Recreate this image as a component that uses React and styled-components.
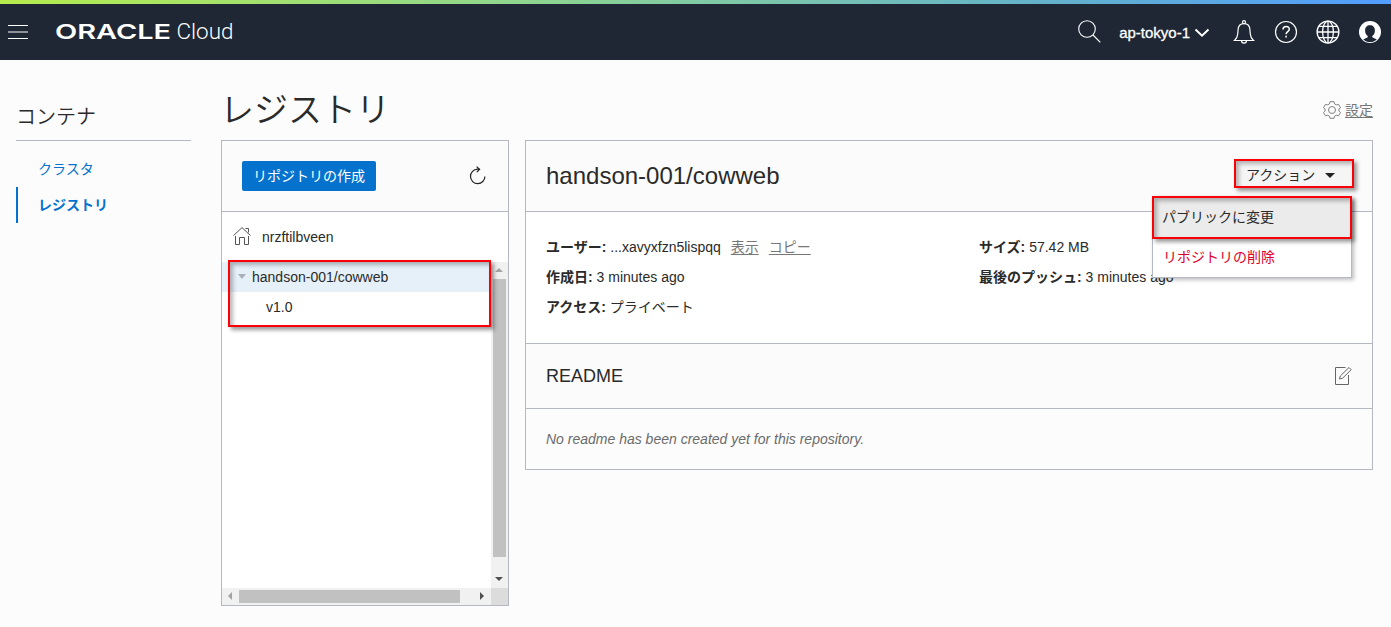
import React from "react";
import styled, { createGlobalStyle, css } from "styled-components";

const line = "#b3b8c3";
const blue = "#0572ce";

const GlobalStyle = createGlobalStyle`
  * { box-sizing: border-box; }
  body {
    margin: 0;
    background: #fcfcfc;
    color: #2a2a2a;
    font: 14px/30px "Liberation Sans", "Noto Sans CJK JP", sans-serif;
    overflow: hidden;
  }
  h1, h2, h3, p, ul { margin: 0; padding: 0; font-weight: 400; list-style: none; }
  button { font: inherit; color: inherit; border: 0; padding: 0; background: none; }
  svg { display: block; flex: none; }
`;

const Page = styled.div`
  height: 627px;
  overflow: hidden;
`;

const TopStripe = styled.div`
  height: 4px;
  background: linear-gradient(90deg, #b5ec4d 0%, #8fd590 38%, #63b1cc 76%, #529dff 100%);
`;

const Header = styled.header`
  height: 56px;
  display: flex;
  align-items: center;
  background: #1e2733;
  color: #fff;
  padding: 0 9px 0 8px;
`;

const MenuButton = styled.button`
  width: 20px;
  height: 14px;
  display: flex;
  flex-direction: column;
  justify-content: space-between;
`;

const MenuLine = styled.span`
  height: ${(p) => (p.$dim ? 2 : 1)}px;
  background: ${(p) => (p.$dim ? "#8f9399" : "#fff")};
`;

const Logo = styled.svg`
  margin-left: 27px;
`;

const HeaderTools = styled.div`
  margin-left: auto;
  display: flex;
  align-items: center;
`;

const Region = styled.div`
  display: flex;
  align-items: center;
  gap: 4px;
  margin: 1px 22px 0 18px;
  font-size: 15px;
  -webkit-text-stroke: 0.3px #fff;
`;

const HeaderIcons = styled.div`
  display: flex;
  align-items: center;
  gap: 18px;
`;

const SearchIcon = styled.svg`
  margin-bottom: 2px;
`;

const Body = styled.div`
  display: flex;
  gap: 30px;
  padding: 0 18px 0 16px;
`;

const Sidebar = styled.nav`
  width: 175px;
  padding-top: 38px;
`;

const SidebarTitle = styled.h2`
  height: 43px;
  line-height: 39px;
  font-size: 20px;
  font-weight: 350;
  border-bottom: 1px solid ${line};
  margin-bottom: 10px;
`;

const SidebarItem = styled.li`
  height: 36px;
  line-height: 36px;
  padding-left: 20px;
  color: ${blue};
  border-left: 2px solid ${(p) => (p.$active ? blue : "transparent")};
  font-weight: ${(p) => (p.$active ? 700 : 400)};
`;

const Main = styled.main`
  flex: 1;
  min-width: 0;
`;

const TitleRow = styled.div`
  height: 80px;
  display: flex;
  justify-content: space-between;
  align-items: center;
`;

const PageTitle = styled.h1`
  font-size: 34px;
  font-weight: 350;
  line-height: 50px;
  margin: 19px 0 0 -1px;
`;

const Settings = styled.a`
  display: flex;
  align-items: center;
  gap: 4px;
  color: #777;
  margin-top: 20px;
  text-decoration: underline;
  text-underline-offset: 2px;
`;

const Columns = styled.div`
  display: flex;
  align-items: flex-start;
  gap: 16px;
`;

const Panel = styled.section`
  border: 1px solid ${line};
  ${(p) => (p.$width ? css`width: ${p.$width}px; flex: none;` : css`flex: 1;`)}
`;

const PanelHeader = styled.div`
  height: ${(p) => p.$height}px;
  display: flex;
  align-items: center;
  justify-content: space-between;
  padding: 0 20px;
  background: #fbfbfb;
  border-bottom: 1px solid ${line};
`;

const CreateButton = styled.button`
  width: 134px;
  height: 30px;
  border-radius: 2px;
  background: ${blue};
  color: #fff;
`;

const RefreshIcon = styled.svg`
  margin: 0 2px 1px 0;
`;

const RootRow = styled.div`
  height: 50px;
  display: flex;
  align-items: center;
  gap: 10px;
  padding-left: 10px;
  background: #fff;
`;

const HomeIcon = styled.svg`
  margin-bottom: 2px;
`;

const ScrollGrid = styled.div`
  position: relative;
  display: grid;
  grid-template: 326px 17px / 269px 17px;
`;

const Tree = styled.ul`
  background: #fff;
`;

const TreeRow = styled.li`
  height: 30px;
  display: flex;
  align-items: center;
  gap: 6px;
  padding-left: ${(p) => p.$indent}px;
  background: ${(p) => (p.$selected ? "#e5f0f9" : "transparent")};
`;

const TwistyIcon = styled.svg`
  margin-bottom: 1px;
`;

const ScrollTrack = styled.div`
  display: flex;
  flex-direction: ${(p) => (p.$vertical ? "column" : "row")};
  justify-content: space-between;
  background: #f1f1f1;
`;

const ScrollArrow = styled.span`
  width: 17px;
  height: 17px;
  display: grid;
  place-items: center;
  padding: 0 1px 1px 0;
`;

const ScrollThumb = styled.span`
  background: #c1c1c1;
  ${(p) =>
    p.$vertical
      ? css`height: ${p.$length}px; margin: 0 2px auto;`
      : css`width: ${p.$length}px; margin: 2px auto 2px 0;`}
`;

const ScrollCorner = styled.div`
  background: #dcdcdc;
`;

const highlight = css`
  border: 2px solid #fb0007;
  box-shadow: 3px 3px 4px rgba(0, 0, 0, 0.4), inset 3px 3px 4px rgba(0, 0, 0, 0.28);
`;

const TreeHighlight = styled.div`
  position: absolute;
  left: 6px;
  top: -2px;
  width: 263px;
  height: 67px;
  ${highlight}
`;

const RepoName = styled.h2`
  font-size: 24px;
`;

const ActionArea = styled.div`
  position: relative;
  height: 29px;
  margin: -5px -2px 0 0;
`;

const ActionButton = styled.button`
  width: 120px;
  height: 29px;
  display: flex;
  align-items: center;
  gap: 10px;
  background: #f5f5f5;
  padding: 3px 0 0 10px;
  ${highlight}
`;

const ActionMenu = styled.ul`
  position: absolute;
  z-index: 2;
  right: 2px;
  top: 37px;
  width: 200px;
  height: 82px;
  background: #fff;
  border: 1px solid ${line};
  box-shadow: 2px 2px 4px rgba(0, 0, 0, 0.25);
`;

const MenuItem = styled.li`
  height: ${(p) => (p.$marked ? 43 : 37)}px;
  line-height: ${(p) => (p.$marked ? 38 : 37)}px;
  color: ${(p) => (p.$danger ? "#e0002d" : "#2a2a2a")};
  padding-left: ${(p) => (p.$marked ? 8 : 10)}px;
  ${(p) =>
    p.$marked &&
    css`
      margin: -1px -1px 0;
      background: #ebebeb;
      ${highlight}
    `}
`;

const Details = styled.div`
  height: 132px;
  display: grid;
  grid-template-columns: 433px 1fr;
  padding: 20px 20px 0;
  background: #fff;
  border-bottom: 1px solid ${line};
`;

const Detail = styled.p`
  height: 30px;
  white-space: nowrap;
`;

const Link = styled.a`
  color: #777;
  margin-left: 10px;
  text-decoration: underline;
  text-underline-offset: 2px;
`;

const ReadmeTitle = styled.h3`
  font-size: 18px;
`;

const ReadmeBody = styled.p`
  height: 60px;
  line-height: 60px;
  padding-left: 20px;
  color: #6b6b6b;
  font-style: italic;
`;

const arrows = {
  up: "M0 4 4 0 8 4Z",
  down: "M0 0h8L4 4Z",
  left: "M4 0v8L0 4Z",
  right: "M0 0v8l4-4Z",
};

function Arrow({ direction, disabled }) {
  const upright = direction === "up" || direction === "down";
  return (
    <ScrollArrow>
      <svg width={upright ? 8 : 4} height={upright ? 4 : 8}>
        <path d={arrows[direction]} fill={disabled ? "#a3a3a3" : "#505050"} />
      </svg>
    </ScrollArrow>
  );
}

function Brand() {
  return (
    <Logo width="180" height="30" viewBox="0 0 180 30" fill="#fff">
      <text x="0" y="22" fontFamily="Inter, sans-serif" fontWeight="600" fontSize="20.500" textLength="116" lengthAdjust="spacingAndGlyphs">
        ORACLE
      </text>
      <text x="121.500" y="22" fontFamily="Roboto, sans-serif" fontWeight="300" fontSize="22.500" textLength="57" lengthAdjust="spacingAndGlyphs">
        Cloud
      </text>
    </Logo>
  );
}

function Gear() {
  return (
    <svg width="18" height="18" viewBox="0 0 18 18" fill="none" stroke="#808080">
      <path d="M7 .7h4l.6 2.200 1.700 1 2.200-.6 2 3.400L15.900 8v2l1.600 1.500-2 3.300-2.200-.6-1.700 1-.6 2.100H7l-.6-2.100-1.700-1-2.200.6-2-3.300L2.100 10V8L.5 6.700l2-3.400 2.200.6 1.700-1Z" strokeLinejoin="round" />
      <circle cx="9" cy="9" r="3.500" />
    </svg>
  );
}

export default function App() {
  return (
    <Page>
      <GlobalStyle />
      <TopStripe />
      <Header>
        <MenuButton aria-label="menu">
          <MenuLine />
          <MenuLine $dim />
          <MenuLine />
        </MenuButton>
        <Brand />
        <HeaderTools>
          <SearchIcon width="23" height="23" viewBox="0 0 23 23" fill="none" stroke="#fff" strokeWidth="1.100">
            <circle cx="9" cy="9" r="8.300" />
            <path d="m15 15 7.300 7.300" />
          </SearchIcon>
          <Region>
            ap-tokyo-1
            <svg width="16" height="10" viewBox="0 0 16 10" fill="none" stroke="#fff" strokeWidth="2">
              <path d="m1.500 1.500 6.500 6.200 6.500-6.200" />
            </svg>
          </Region>
          <HeaderIcons>
            <svg width="24" height="24" viewBox="-1 0 24 24" fill="none" stroke="#fff" strokeWidth="1.200">
              <path d="M1.500 20.500c2.200-2 3-3.300 3.200-6.500l.4-4.500C5.400 5.800 7.800 3.600 11 3.600s5.600 2.200 5.900 5.900l.4 4.500c.2 3.200 1 4.500 3.200 6.500Z" />
              <circle cx="11" cy="2.200" r="1.500" />
              <path d="M8.500 20.800a2.500 2.300 0 0 0 5 0" />
            </svg>
            <svg width="24" height="24" viewBox="0 0 24 24" fill="none" stroke="#fff" strokeWidth="1.200">
              <circle cx="12" cy="12" r="10.500" />
              <path d="M9 9.600c0-4.100 6.300-3.900 6.300-.4 0 2.500-3.200 2.300-3.200 5" strokeWidth="1.500" />
              <path d="M12.100 15.800v1.800" strokeWidth="1.600" />
            </svg>
            <svg width="24" height="24" viewBox="0 0 24 24" fill="none" stroke="#fff" strokeWidth="1.300">
              <circle cx="12" cy="12" r="10.900" />
              <ellipse cx="12" cy="12" rx="5.400" ry="10.900" />
              <path d="M12 1v22M1 12h22M3 6.300h18M3 17.700h18" />
            </svg>
            <svg width="24" height="24" viewBox="-1 -1 24 24">
              <circle cx="11" cy="11" r="11" fill="#fff" />
              <path d="M11 4.200c-3 0-4.900 2-4.900 5.200 0 2.500.9 4.400 2.600 5.600v1.200l-4.500 2.200C6 20 8.500 21 11 21s5-1 6.800-2.600l-4.500-2.200V15c1.700-1.200 2.600-3.100 2.600-5.600 0-3.200-1.900-5.200-4.900-5.200Z" fill="#1e2733" />
            </svg>
          </HeaderIcons>
        </HeaderTools>
      </Header>
      <Body>
        <Sidebar>
          <SidebarTitle>コンテナ</SidebarTitle>
          <ul>
            <SidebarItem>クラスタ</SidebarItem>
            <SidebarItem $active>レジストリ</SidebarItem>
          </ul>
        </Sidebar>
        <Main>
          <TitleRow>
            <PageTitle>レジストリ</PageTitle>
            <Settings>
              <Gear />
              設定
            </Settings>
          </TitleRow>
          <Columns>
            <Panel $width={288}>
              <PanelHeader $height={71}>
                <CreateButton>リポジトリの作成</CreateButton>
                <RefreshIcon width="17" height="19" viewBox="0 0 17 19" fill="none" stroke="#222" strokeWidth="1.200">
                  <path d="M10 3.200H8.500a7.200 7.200 0 1 0 7.400 7.200M7.600.6l3 2.600-2.800 2.900" />
                </RefreshIcon>
              </PanelHeader>
              <RootRow>
                <HomeIcon width="20" height="20" viewBox="0 0 20 20" fill="none" stroke="#555">
                  <path d="m1.500 9.600 8.500-8 8.500 8M3.500 10v8.500h4v-7h5v7h4V10M13.500 2.500h3v4" />
                </HomeIcon>
                nrzftilbveen
              </RootRow>
              <ScrollGrid>
                <Tree>
                  <TreeRow $selected $indent={16}>
                    <TwistyIcon width="8" height="5">
                      <path d="M0 0h8L4 5Z" fill="#a9b0ba" />
                    </TwistyIcon>
                    handson-001/cowweb
                  </TreeRow>
                  <TreeRow $indent={44}>v1.0</TreeRow>
                </Tree>
                <ScrollTrack $vertical>
                  <Arrow direction="up" disabled />
                  <ScrollThumb $vertical $length={278} />
                  <Arrow direction="down" />
                </ScrollTrack>
                <ScrollTrack>
                  <Arrow direction="left" disabled />
                  <ScrollThumb $length={221} />
                  <Arrow direction="right" />
                </ScrollTrack>
                <ScrollCorner />
                <TreeHighlight />
              </ScrollGrid>
            </Panel>
            <Panel>
              <PanelHeader $height={71}>
                <RepoName>handson-001/cowweb</RepoName>
                <ActionArea>
                  <ActionButton>
                    アクション
                    <svg width="10" height="5">
                      <path d="M0 0h10L5 5Z" fill="#222" />
                    </svg>
                  </ActionButton>
                  <ActionMenu>
                    <MenuItem $marked>パブリックに変更</MenuItem>
                    <MenuItem $danger>リポジトリの削除</MenuItem>
                  </ActionMenu>
                </ActionArea>
              </PanelHeader>
              <Details>
                <div>
                  <Detail>
                    <b>ユーザー:</b> ...xavyxfzn5lispqq<Link>表示</Link>
                    <Link>コピー</Link>
                  </Detail>
                  <Detail>
                    <b>作成日:</b> 3 minutes ago
                  </Detail>
                  <Detail>
                    <b>アクセス:</b> プライベート
                  </Detail>
                </div>
                <div>
                  <Detail>
                    <b>サイズ:</b> 57.42 MB
                  </Detail>
                  <Detail>
                    <b>最後のプッシュ:</b> 3 minutes ago
                  </Detail>
                </div>
              </Details>
              <PanelHeader $height={65}>
                <ReadmeTitle>README</ReadmeTitle>
                <svg width="18" height="20" viewBox="0 0 18 20" fill="none" stroke="#666">
                  <path d="M11.500 1.500h-10v17h13V9" />
                  <path d="m5.500 13 .8-3L15 1.500l2.200 2.200-8.600 8.500Z" />
                </svg>
              </PanelHeader>
              <ReadmeBody>No readme has been created yet for this repository.</ReadmeBody>
            </Panel>
          </Columns>
        </Main>
      </Body>
    </Page>
  );
}
